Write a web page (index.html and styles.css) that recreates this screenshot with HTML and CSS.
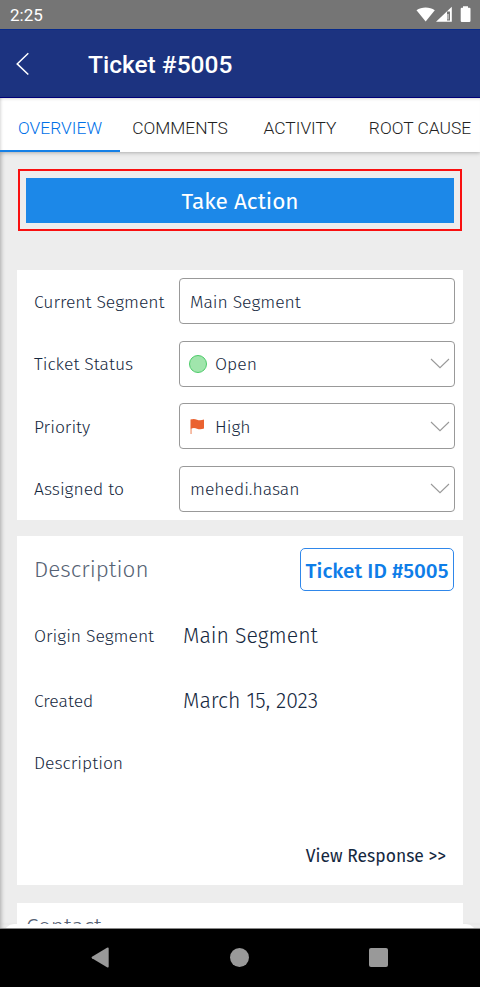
FILE: index.html
```html
<!DOCTYPE html>
<html lang="en">
<head>
    <meta charset="UTF-8">
    <meta name="viewport" content="width=device-width, initial-scale=1.0">
    <title>Ticket #5005</title>
    <link rel="stylesheet" href="styles.css">
</head>
<body>
    <div class="status-bar">
        <span class="clock">2:25</span>
        <svg class="status-icons" width="56" height="18" viewBox="0 0 56 18">
            <path d="M0.5 4.2C5.5 0.7 13.8 0.7 18.8 4.2L9.7 15.6Z" fill="#fff"/>
            <path fill-rule="evenodd" d="M20 15.8L35.8 0.8V15.8ZM31 5.5V14.5H34V5.5Z" fill="#fff"/>
            <path d="M32 8V13.5" stroke="#fff" stroke-width="0.9"/>
            <path d="M47 0.3H52V1.8H53.5Q54.5 1.8 54.5 2.8V14.8Q54.5 16 53.3 16H45.9Q44.7 16 44.7 14.8V2.8Q44.7 1.8 45.7 1.8H47Z" fill="#fff"/>
        </svg>
    </div>

    <header class="header">
        <svg class="back" width="14" height="24" viewBox="0 0 14 24">
            <path d="M12.3 1.3L1.2 11.9L12.3 22.5" fill="none" stroke="#fff" stroke-width="1.5"/>
        </svg>
        <h1>Ticket #5005</h1>
    </header>

    <nav class="tabs">
        <a class="tab active">OVERVIEW</a>
        <a class="tab">COMMENTS</a>
        <a class="tab">ACTIVITY</a>
        <a class="tab">ROOT CAUSE</a>
    </nav>

    <main class="content">
        <div class="highlight">
            <button class="action">Take Action</button>
        </div>

        <section class="card fields">
            <label>Current Segment</label>
            <div class="field">Main Segment</div>
            <label>Ticket Status</label>
            <div class="field">
                <span class="dot"></span>Open
                <svg class="chevron" width="20" height="12" viewBox="0 0 20 12"><path d="M1 1L10 9.7L19 1"/></svg>
            </div>
            <label>Priority</label>
            <div class="field">
                <svg class="flag" width="15" height="17" viewBox="0 0 15 17">
                    <path d="M0.5 1.5H1.6V16H0.5Z" fill="#f08b63"/>
                    <path d="M0.8 1.5C3 0.5 5 0.8 7 1.7C9 2.6 11.5 2.5 14 1.6V10.6C11.5 11.6 9 11.6 7 10.7C5 9.8 3 9.8 0.8 10.7Z" fill="#ea6230"/>
                </svg>High
                <svg class="chevron" width="20" height="12" viewBox="0 0 20 12"><path d="M1 1L10 9.7L19 1"/></svg>
            </div>
            <label>Assigned to</label>
            <div class="field">mehedi.hasan
                <svg class="chevron" width="20" height="12" viewBox="0 0 20 12"><path d="M1 1L10 9.7L19 1"/></svg>
            </div>
        </section>

        <section class="card description">
            <div class="card-head">
                <h2>Description</h2>
                <span class="ticket-id">Ticket ID #5005</span>
            </div>
            <div class="info">
                <span class="name">Origin Segment</span>
                <span class="value">Main Segment</span>
                <span class="name">Created</span>
                <span class="value">March 15, 2023</span>
                <span class="name">Description</span>
            </div>
            <a class="response">View Response &gt;&gt;</a>
        </section>

        <section class="card contact">
            <h2>Contact</h2>
        </section>
    </main>

    <div class="sheet-edge"><div class="sheet"></div></div>

    <footer class="nav-bar">
        <svg width="18" height="21" viewBox="0 0 18 21"><path d="M16 0.8Q17.7 0 17.7 1.8V19.2Q17.7 21 16 20.2L1 11.3Q0 10.5 1 9.7Z" fill="#999"/></svg>
        <span class="home"></span>
        <span class="recent"></span>
    </footer>
</body>
</html>
```

FILE: styles.css
```css
* {
    box-sizing: border-box;
}
body {
    margin: 0;
    height: 987px;
    display: flex;
    flex-direction: column;
    overflow: hidden;
    background-color: #ededed;
    color: #152840;
    font-family: "Fira Sans", "Noto Sans", sans-serif;
    font-size: 17.5px;
    font-weight: 300;
}
h1, h2 {
    margin: 0;
}
.status-bar {
    flex: none;
    height: 29px;
    padding: 0 6px 0 10px;
    display: flex;
    align-items: center;
    justify-content: space-between;
    background-color: #757575;
    color: #fff;
}
.clock {
    font: 17px Roboto, sans-serif;
    padding-top: 1px;
}
.status-icons {
    margin-top: 1px;
    margin-right: 2px;
}
.header {
    flex: none;
    height: 69px;
    padding-left: 16px;
    display: flex;
    align-items: center;
    background-color: #1c3380;
    border-top: 1px solid #06298a;
    border-bottom: 1px solid #000080;
    color: #fff;
}
.header h1 {
    margin-left: 58px;
    padding-top: 2px;
    font: 500 24.5px Roboto, sans-serif;
}
.tabs {
    flex: none;
    position: relative;
    height: 54px;
    display: flex;
    background-color: #fff;
    box-shadow: 0 1px 4px rgba(0,0,0,0.25), inset 0 3px 3px -2px rgba(0,0,0,0.15), inset 3px 0 3px -2px rgba(0,0,0,0.15);
    font-family: Roboto, sans-serif;
    font-size: 17.4px;
    font-weight: 300;
    color: #222;
}
.tab {
    flex: none;
    width: 120px;
    padding-top: 6px;
    display: flex;
    align-items: center;
    justify-content: center;
    white-space: nowrap;
}
.tab.active {
    color: #0070e8;
    border-bottom: 2px solid #1680e6;
    padding-top: 8px;
}
.content {
    flex: 1;
    min-height: 0;
    padding: 17px 17px 0;
    overflow: hidden;
    box-shadow: inset 4px 0 4px -3px rgba(0,0,0,0.3);
}
.highlight {
    height: 62px;
    margin: 0 1px;
    padding: 7px 6px 6px;
    border: 2px solid #f91010;
}
.action {
    display: block;
    width: 100%;
    height: 45px;
    padding: 1px 0 0;
    border: 0;
    background-color: #1c88e8;
    color: #fff;
    font-family: inherit;
    font-size: 22.6px;
}
.card {
    background-color: #fff;
}
.fields {
    height: 250px;
    margin-top: 39px;
    padding: 8px 8px 8px 17px;
    display: grid;
    grid-template-columns: 145px 1fr;
    grid-auto-rows: 46px;
    row-gap: 16.6px;
    align-items: center;
}
.fields label {
    padding-top: 2px;
}
.field {
    height: 46px;
    padding: 2px 4px 0 10px;
    display: flex;
    align-items: center;
    border: 1px solid #999;
    border-radius: 4px;
}
.dot {
    width: 18px;
    height: 18px;
    margin: -2px 8px 0 -1px;
    border: 1px solid #4dcb6a;
    border-radius: 50%;
    background-color: #a0e5ac;
}
.flag {
    margin: -2px 10px 0 0;
}
.chevron {
    margin-top: -1px;
    margin-left: auto;
    fill: none;
    stroke: #999;
    stroke-width: 1.1;
}
.description {
    height: 349px;
    margin-top: 16px;
    padding: 12px 9px 0 17px;
}
.card-head {
    display: flex;
    align-items: center;
    justify-content: space-between;
}
h2 {
    font-size: 22.5px;
    font-weight: 300;
    color: #566274;
}
.ticket-id {
    width: 154px;
    height: 43px;
    line-height: 44px;
    border: 1px solid #2f87ea;
    border-radius: 5px;
    text-align: center;
    white-space: nowrap;
    font-size: 20.7px;
    font-weight: 500;
    color: #0e7de8;
}
.info {
    margin-top: 12px;
    display: grid;
    grid-template-columns: 149px 1fr;
    grid-template-rows: 65px 65px 60px;
    align-items: center;
}
.name {
    padding-top: 1px;
}
.value {
    font-size: 21.3px;
}
.response {
    display: block;
    margin: 53px 8px 0 0;
    text-align: right;
    font-size: 17.5px;
    font-weight: 400;
}
.contact {
    height: 120px;
    margin-top: 18px;
    padding: 10px 9px;
}
.sheet-edge {
    flex: none;
    height: 5px;
    overflow: hidden;
    border-bottom: 1px solid #888;
    box-shadow: inset 4px 0 4px -3px rgba(0,0,0,0.3);
}
.sheet {
    height: 20px;
    margin: 0 4px;
    border-radius: 10px;
    background-color: #fff;
}
.nav-bar {
    flex: none;
    height: 58px;
    padding: 0 92px 1px 91px;
    display: flex;
    align-items: center;
    justify-content: space-between;
    background-color: #000;
}
.home {
    width: 19px;
    height: 19px;
    border-radius: 50%;
    background-color: #999;
}
.recent {
    width: 19px;
    height: 19px;
    border-radius: 2px;
    background-color: #999;
}
```
